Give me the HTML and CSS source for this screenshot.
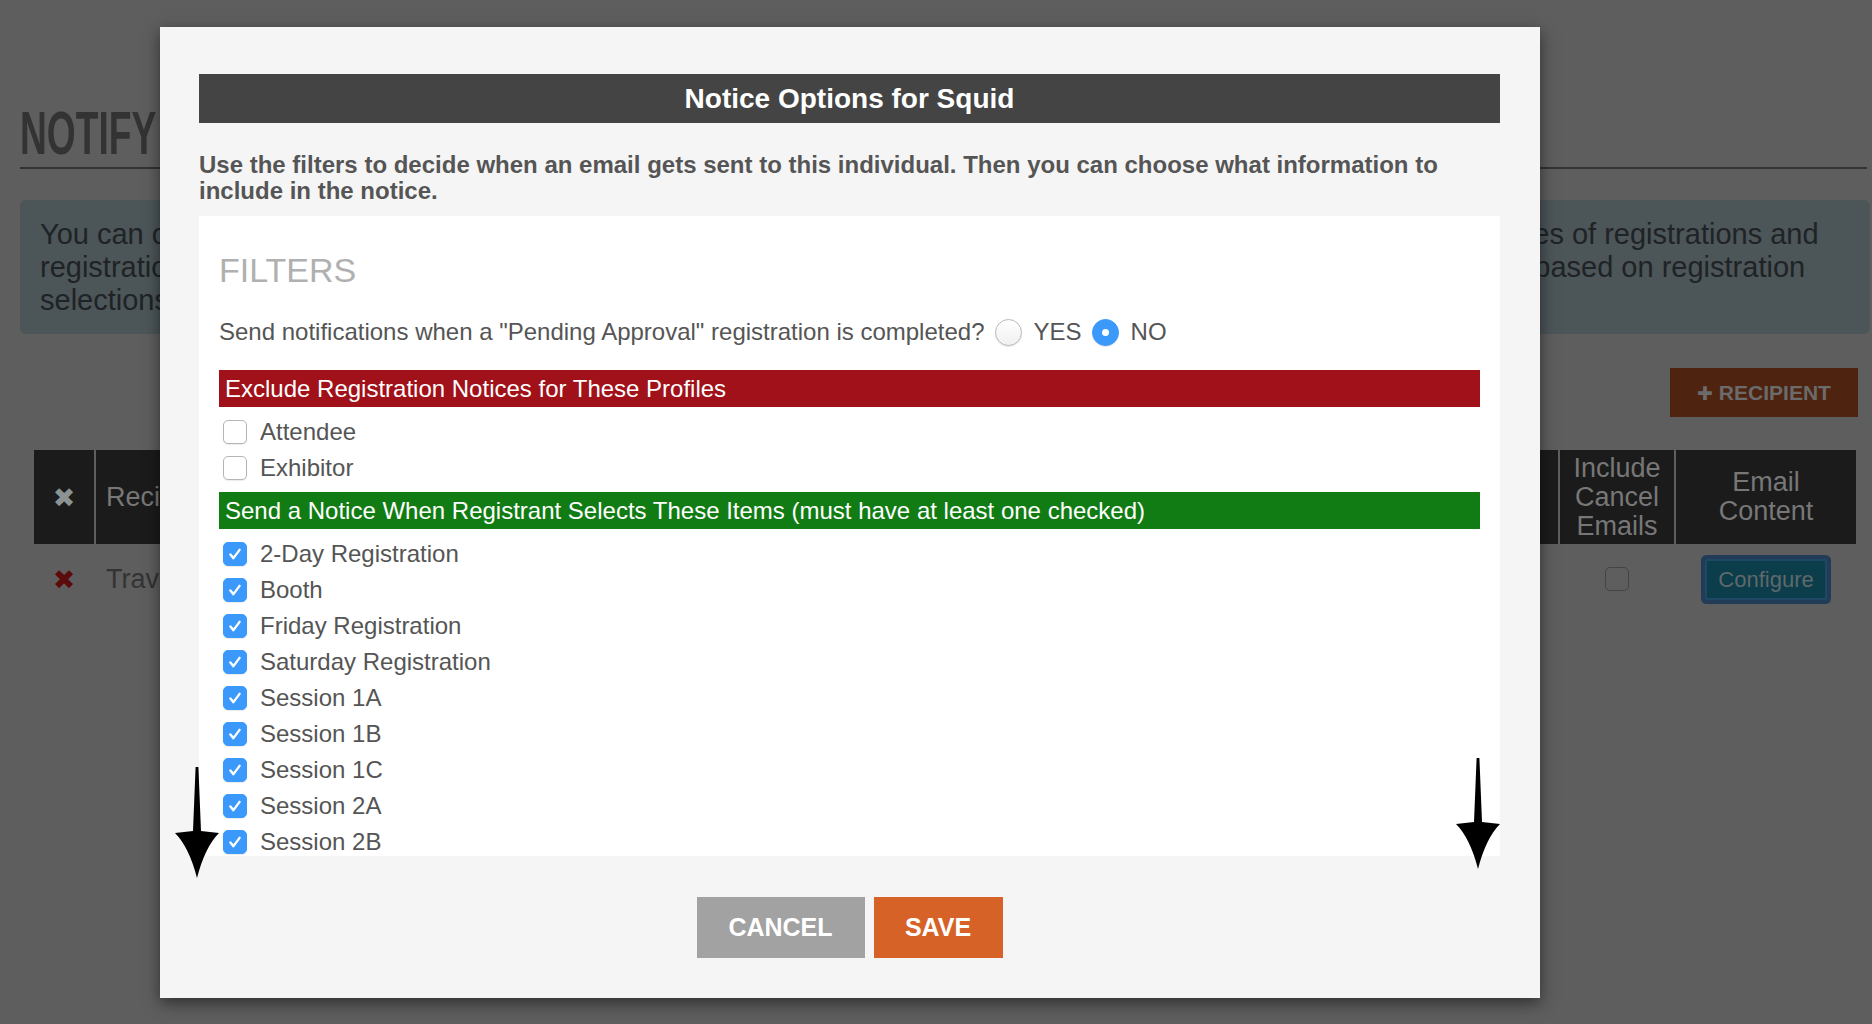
FILE: index.html
```html
<!DOCTYPE html>
<html lang="en">
<head>
  <meta charset="UTF-8">
  <title>Notify</title>
  <link rel="stylesheet" href="styles.css">
</head>
<body>
  <div class="page">
    <h1 class="page-title"><span>NOTIFY</span></h1>
    <div class="info">
      You can create notices that are emailed to a recipient whenever there are new registrations, cancellations, or instances of registrations and<br>
      registration notices can also be limited to certain profiles or items, so that a notice is only sent out to the right people based on registration<br>
      selections.
    </div>
    <div class="actions">
      <button class="btn-add"><span class="plus">&#10010;</span> RECIPIENT</button>
    </div>
    <div class="grid">
      <div class="cell head icon">&#10006;</div>
      <div class="cell head left">Recipient</div>
      <div class="cell head left"></div>
      <div class="cell head">Include<br>Cancel<br>Emails</div>
      <div class="cell head">Email<br>Content</div>

      <div class="cell icon remove">&#10006;</div>
      <div class="cell left">Travel Desk</div>
      <div class="cell left"></div>
      <div class="cell"><span class="dim-box"></span></div>
      <div class="cell"><button class="btn-config">Configure</button></div>
    </div>
  </div>

  <div class="modal">
    <div class="modal-title">Notice Options for Squid</div>
    <p class="modal-intro">Use the filters to decide when an email gets sent to this individual. Then you can choose what information to include in the notice.</p>

    <div class="panel">
      <h2 class="panel-heading">FILTERS</h2>
      <div class="question">
        Send notifications when a "Pending Approval" registration is completed?
        <span class="radio"></span><span class="radio-label">YES</span>
        <span class="radio on"></span><span class="radio-label">NO</span>
      </div>

      <div class="band band-red">Exclude Registration Notices for These Profiles</div>
      <div class="options">
        <label class="option"><span class="box"></span>Attendee</label>
        <label class="option"><span class="box"></span>Exhibitor</label>
      </div>

      <div class="band band-green">Send a Notice When Registrant Selects These Items (must have at least one checked)</div>
      <div class="options">
        <label class="option"><span class="box on"><svg viewBox="0 0 24 24"><path d="M7 12.5 L10.3 16.5 L17 7.5"/></svg></span>2-Day Registration</label>
        <label class="option"><span class="box on"><svg viewBox="0 0 24 24"><path d="M7 12.5 L10.3 16.5 L17 7.5"/></svg></span>Booth</label>
        <label class="option"><span class="box on"><svg viewBox="0 0 24 24"><path d="M7 12.5 L10.3 16.5 L17 7.5"/></svg></span>Friday Registration</label>
        <label class="option"><span class="box on"><svg viewBox="0 0 24 24"><path d="M7 12.5 L10.3 16.5 L17 7.5"/></svg></span>Saturday Registration</label>
        <label class="option"><span class="box on"><svg viewBox="0 0 24 24"><path d="M7 12.5 L10.3 16.5 L17 7.5"/></svg></span>Session 1A</label>
        <label class="option"><span class="box on"><svg viewBox="0 0 24 24"><path d="M7 12.5 L10.3 16.5 L17 7.5"/></svg></span>Session 1B</label>
        <label class="option"><span class="box on"><svg viewBox="0 0 24 24"><path d="M7 12.5 L10.3 16.5 L17 7.5"/></svg></span>Session 1C</label>
        <label class="option"><span class="box on"><svg viewBox="0 0 24 24"><path d="M7 12.5 L10.3 16.5 L17 7.5"/></svg></span>Session 2A</label>
        <label class="option"><span class="box on"><svg viewBox="0 0 24 24"><path d="M7 12.5 L10.3 16.5 L17 7.5"/></svg></span>Session 2B</label>
      </div>
    </div>

    <div class="modal-footer">
      <button class="btn btn-cancel">CANCEL</button>
      <button class="btn btn-save">SAVE</button>
    </div>

    <!-- scroll hint arrows -->
    <svg class="arrow arrow-left" viewBox="0 0 44 111"><path d="M20.6 0 L23.4 0 L26 64 L44 66 Q30 80 22 111 Q14 80 0 66 L18 64 Z"/></svg>
    <svg class="arrow arrow-right" viewBox="0 0 44 111"><path d="M20.6 0 L23.4 0 L26 64 L44 66 Q30 80 22 111 Q14 80 0 66 L18 64 Z"/></svg>
  </div>
</body>
</html>
```

FILE: styles.css
```css
body {
  margin: 0;
  background: #5e5e5e;
  font-family: "Liberation Sans", Arial, sans-serif;
  color: #333;
  height: 1024px;
  overflow: hidden;
}

/* dimmed page behind the modal */
.page {
  padding: 102px 2px 0 20px;
}

.page-title {
  margin: 0;
  height: 62px;
  font-size: 62px;
  line-height: 62px;
  font-weight: bold;
  color: #333;
}

.page-title span {
  display: inline-block;
  transform: scaleX(0.6);
  transform-origin: left center;
}

.page-title::after {
  content: "";
  display: block;
  margin: 3px 3px 0 0;
  border-top: 2px solid #333;
}

.info {
  margin-top: 36px;
  padding: 18px 20px 17px;
  background: #4c5558;
  border-radius: 6px;
  font-size: 29px;
  line-height: 33px;
  color: #1f2325;
  white-space: nowrap;
  overflow: hidden;
}

.actions {
  display: flex;
  justify-content: flex-end;
  margin-top: 34px;
  padding-right: 12px;
}

.btn-add {
  width: 188px;
  height: 49px;
  border: none;
  background: #4e2410;
  color: #6b6b6b;
  font-family: inherit;
  font-size: 21px;
  font-weight: bold;
}

.btn-add .plus {
  font-family: "DejaVu Sans", sans-serif;
  font-size: 19px;
}

.grid {
  display: grid;
  grid-template-columns: 60px 700px 1fr 114px 180px;
  column-gap: 2px;
  margin: 33px 14px 0;
}

.cell {
  display: flex;
  align-items: center;
  justify-content: center;
  text-align: center;
  font-size: 27px;
  line-height: 29px;
  color: #333;
  padding-top: 14px;
}

.cell.head {
  height: 94px;
  padding-top: 0;
  background: #1b1b1b;
  color: #777;
}

.cell.left {
  justify-content: flex-start;
  padding-left: 10px;
  text-align: left;
}

.cell.icon {
  font-family: "DejaVu Sans", sans-serif;
  font-size: 27px;
  color: #8b9393;
}

.cell.remove {
  color: #5b0b0b;
}

.dim-box {
  width: 22px;
  height: 22px;
  border: 1px solid #444;
  border-radius: 5px;
  background: #5e5e5e;
}

.btn-config {
  width: 122px;
  height: 41px;
  margin-top: 1px;
  background: #0c3d4b;
  border: 2px solid #1f4866;
  border-radius: 2px;
  box-shadow: 0 0 0 4px #223c58;
  color: #5f686b;
  font-family: inherit;
  font-size: 22px;
}

/* modal */
.modal {
  position: absolute;
  left: 160px;
  top: 27px;
  width: 1380px;
  height: 971px;
  box-sizing: border-box;
  padding: 47px 40px 0 39px;
  background: #f5f5f5;
  box-shadow: 0 5px 15px rgba(0, 0, 0, 0.5);
}

.modal-title {
  height: 49px;
  background: #444;
  color: #fff;
  font-size: 28px;
  font-weight: bold;
  line-height: 49px;
  text-align: center;
}

.modal-intro {
  margin: 29px 0 12px;
  font-size: 24px;
  font-weight: bold;
  line-height: 26px;
  color: #555;
}

.panel {
  height: 640px;
  box-sizing: border-box;
  padding: 34px 20px 0;
  background: #fff;
  overflow: hidden;
}

.panel-heading {
  margin: 0;
  font-size: 34px;
  font-weight: normal;
  line-height: 40px;
  color: #b0b0b0;
}

.question {
  display: flex;
  align-items: center;
  margin-top: 24px;
  height: 36px;
  font-size: 24px;
  color: #555;
}

.radio {
  width: 25px;
  height: 25px;
  margin-left: 10px;
  border: 1px solid #b8b8b8;
  border-radius: 50%;
  background: linear-gradient(#fff, #f0f0f0);
  box-shadow: 0 1px 1px rgba(0, 0, 0, 0.1);
  position: relative;
}

.radio.on {
  border-color: #3b99fc;
  background: #3b99fc;
}

.radio.on::after {
  content: "";
  position: absolute;
  left: 9px;
  top: 9px;
  width: 7px;
  height: 7px;
  border-radius: 50%;
  background: #fff;
}

.radio-label {
  margin-left: 12px;
}

.band {
  height: 37px;
  margin-top: 20px;
  padding-left: 6px;
  line-height: 37px;
  font-size: 24px;
  color: #fff;
}

.band-red {
  background: #a11119;
}

.band-green {
  margin-top: 6px;
  background: #117c13;
}

.options {
  margin-top: 7px;
}

.option {
  display: flex;
  align-items: center;
  height: 36px;
  padding-left: 4px;
  font-size: 24px;
  color: #555;
}

.box {
  width: 22px;
  height: 22px;
  margin-right: 13px;
  border: 1px solid #b5b5b5;
  border-radius: 5px;
  background: #fff;
  box-shadow: 0 1px 1px rgba(0, 0, 0, 0.08);
}

.box.on {
  border-color: #3b99fc;
  background: #3b99fc;
}

.box svg {
  display: block;
  width: 22px;
  height: 22px;
}

.box path {
  fill: none;
  stroke: #fff;
  stroke-width: 2.6;
  stroke-linecap: round;
  stroke-linejoin: round;
}

.modal-footer {
  display: flex;
  justify-content: center;
  gap: 9px;
  margin-top: 41px;
}

.btn {
  height: 61px;
  border: none;
  color: #fff;
  font-family: inherit;
  font-size: 25px;
  font-weight: bold;
}

.btn-cancel {
  width: 168px;
  background: #a2a2a2;
}

.btn-save {
  width: 129px;
  background: #d66228;
}

.arrow {
  position: absolute;
  width: 44px;
  height: 111px;
  fill: #000;
}

.arrow-left {
  left: 15px;
  top: 740px;
}

.arrow-right {
  left: 1296px;
  top: 731px;
}
```
